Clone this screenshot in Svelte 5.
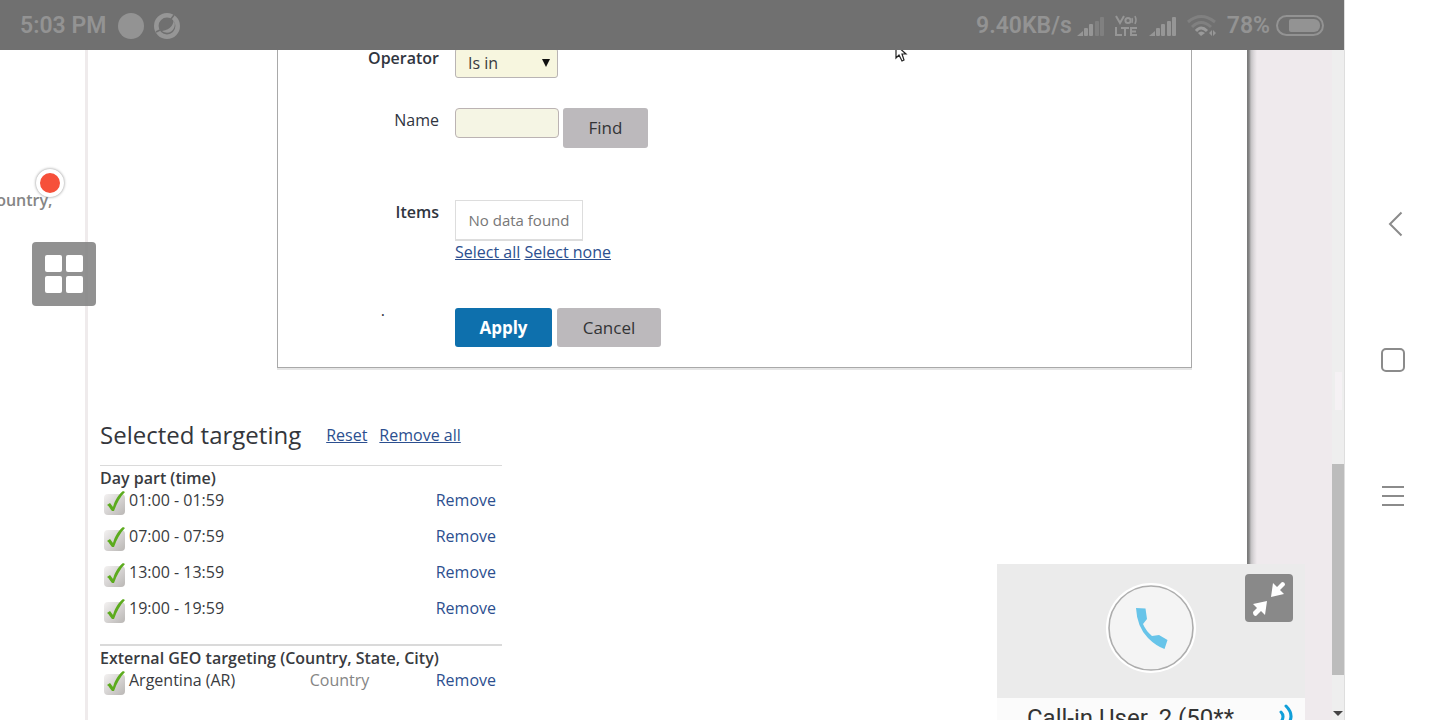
<script>
  const hours = ['01:00 - 01:59', '07:00 - 07:59', '13:00 - 13:59', '19:00 - 19:59'];
  const regions = [{ name: 'Argentina (AR)', type: 'Country' }];
  const bars = [8, 12, 15, 19];
</script>

{#snippet signal(dim)}
  <svg class="signal" width="28" height="20" viewBox="0 0 28 20" aria-hidden="true">
    <path d="M0 20 6 15V20Z" fill="#969696" />
    {#each bars as h, i}
      <rect x={7 + i * 5 + (i > 1 ? 1 : 0)} y={20 - h} width="4" height={h} rx="1" fill={dim && i > 1 ? '#808080' : '#969696'} />
    {/each}
  </svg>
{/snippet}

{#snippet check()}
  <svg class="check" width="24" height="24" viewBox="0 0 24 24" aria-hidden="true">
    <defs>
      <linearGradient id="tile" x1="0" y1="0" x2="1" y2="1">
        <stop offset="0" stop-color="#f4f2f2" />
        <stop offset="1" stop-color="#b9b6b4" />
      </linearGradient>
    </defs>
    <rect x="0" y="3" width="21" height="21" rx="4" fill="url(#tile)" />
    <path d="M3 14 6 12 9 16C11 9 14 4 19 0L21 1C16 6 13 12 10 20H8C6 18 5 15 3 14Z" fill="#5cab1e" />
  </svg>
{/snippet}

<div class="screen">
  <div class="main">
    <header class="status">
      <span>5:03 PM</span>
      <svg class="disc" width="26" height="26" viewBox="0 0 26 26" aria-hidden="true"><circle cx="13" cy="13" r="13" fill="#939393" /></svg>
      <svg class="ring" width="26" height="26" viewBox="0 0 26 26" aria-hidden="true">
        <circle cx="13" cy="13" r="10.7" fill="none" stroke="#969696" stroke-width="4.6" />
        <path d="M19 5C21 10 17 17 8 18C12 21 18 20 20 15C22 11 20 7 19 5Z" fill="#969696" />
        <path d="M17 6 20 2M2 19 6 17" stroke="#707070" stroke-width="1.5" />
      </svg>
      <span class="rate">9.40KB/s</span>
      {@render signal(true)}
      <svg class="volte" width="24" height="22" viewBox="0 0 24 22" aria-hidden="true">
        <g fill="none" stroke="#969696" stroke-width="2">
          <path d="M1 1 5 8 9 1M1 12V20H7M6 13H14M10 13V21M22 13H16V20H22M16 16.500H21" />
          <circle cx="13" cy="5.500" r="2.600" />
          <path d="M17 3Q18 5 17 8M20 1Q22 5 20 9" stroke-width="1.500" />
        </g>
      </svg>
      {@render signal(false)}
      <svg class="wifi" width="30" height="24" viewBox="0 0 30 24" aria-hidden="true">
        <g fill="none" stroke-width="3">
          <path d="M1 8Q14 -3 28 8" stroke="#808080" />
          <path d="M5 13Q14 4 24 13" stroke="#808080" />
          <path d="M9 17Q14 11 20 17" stroke="#9a9a9a" />
        </g>
        <path d="M11 19Q14 16 18 19L14 22Z" fill="#9a9a9a" />
        <path d="M25 16V22L22 19M26 22V16L29 19" fill="#969696" />
      </svg>
      <span>78%</span>
      <span class="battery"><span></span></span>
    </header>

    <div class="viewport">
      <aside class="side"><span>Country,</span></aside>
      <main class="page">
        <form class="panel" onsubmit={(e) => e.preventDefault()}>
          <div class="field">
            <label class="medium first" for="operator">Operator</label>
            <div class="control select">
              <select id="operator"><option>Is in</option></select>
            </div>
          </div>
          <div class="field name">
            <label for="name">Name</label>
            <div class="control">
              <input id="name" type="text" />
              <button class="find" type="button">Find</button>
            </div>
          </div>
          <div class="field items">
            <span class="label medium">Items</span>
            <div>
              <div class="empty">No data found</div>
              <div class="links"><a href="#all">Select all</a> <a href="#none">Select none</a></div>
            </div>
          </div>
          <div class="field">
            <span class="label point">.</span>
            <div class="control actions">
              <button class="apply" type="submit">Apply</button>
              <button class="cancel" type="button">Cancel</button>
            </div>
          </div>
        </form>

        <section class="targeting">
          <div class="heading">
            <h2>Selected targeting</h2>
            <a href="#reset">Reset</a>
            <a href="#remove-all">Remove all</a>
          </div>
          <div class="group">
            <h3>Day part (time)</h3>
            {#each hours as hour}
              <div class="row">{@render check()}<span class="what">{hour}</span><a href="#remove">Remove</a></div>
            {/each}
          </div>
          <div class="group geo">
            <h3>External GEO targeting (Country, State, City)</h3>
            {#each regions as region}
              <div class="row">{@render check()}<span class="what">{region.name}</span><span class="type">{region.type}</span><a href="#remove">Remove</a></div>
            {/each}
          </div>
        </section>
      </main>
      <div class="gutter"></div>
      <div class="scroll"><span class="mark"></span><span class="thumb"></span><span class="down"></span></div>
    </div>

    <svg class="cursor" width="14" height="19" viewBox="0 0 14 19" aria-hidden="true">
      <path d="M1 1V14L4 11 7 17 9 16 7 10H11Z" fill="#fff" stroke="#222" stroke-width="1.2" />
    </svg>
    <span class="record"></span>
    <button class="tiles" type="button" aria-label="Apps"><i></i><i></i><i></i><i></i></button>

    <div class="call">
      <div class="stage">
        <svg class="avatar" width="90" height="90" viewBox="0 0 90 90" aria-hidden="true">
          <circle cx="45" cy="45" r="45" fill="#fff" />
          <circle cx="45" cy="45" r="42" fill="#f4f4f4" stroke="#adadad" stroke-width="1.6" />
          <path d="M30 25 39.500 25.500 41 36 37 41Q40 48 46 53L53 52 61.500 57 58.500 66Q50 63 42 55Q31 44 30 25Z" fill="#67c4e9" />
        </svg>
        <button class="shrink" type="button" aria-label="Minimize">
          <svg width="48" height="48" viewBox="0 0 48 48" aria-hidden="true">
            <path d="M26 23 28 9 32 13 37 8Q40 8 40 11L35 16 39 20ZM22 27 8 30 12 34 8 38Q8 42 11 42L16 37 20 41Z" fill="#fff" />
          </svg>
        </button>
      </div>
      <div class="caller">
        <span>Call-in User_2 (50**</span>
        <svg width="16" height="24" viewBox="0 0 16 24" aria-hidden="true">
          <path d="M2 8Q6 12 2 18M7 2Q17 12 7 23" fill="none" stroke="#109fd9" stroke-width="3" stroke-linecap="round" />
        </svg>
      </div>
    </div>
  </div>

  <nav class="system">
    <button type="button" aria-label="Back"><svg width="24" height="26" viewBox="0 0 24 26"><path d="M20.500 1.500 9 13 20.500 24.500" /></svg></button>
    <button type="button" aria-label="Home"><svg width="24" height="26" viewBox="0 0 24 26"><rect x="1" y="2" width="22" height="22" rx="4" /></svg></button>
    <button type="button" aria-label="Menu"><svg width="24" height="26" viewBox="0 0 24 26"><path d="M1 4H23M1 13H23M1 22H23" /></svg></button>
  </nav>
</div>

<style>
  :global(body) { margin: 0; background: #fff; }
  * { box-sizing: border-box; }
  .screen { display: flex; height: 100vh; overflow: hidden; font: 16px/24px "Open Sans", sans-serif; color: #393b40; }
  button { font: inherit; border: 0; padding: 0; }
  a { color: #2c4f8f; }

  .main { position: relative; flex: 1; display: flex; flex-direction: column; min-width: 0; }
  .status { display: flex; align-items: center; flex: none; height: 50px; padding: 2px 20px 0; background: #707070; color: #939393; font: 600 23px/28px Roboto, sans-serif; }
  .disc { margin-left: 12px; }
  .ring { margin-left: 10px; }
  .rate { margin-left: auto; }
  .signal { margin-left: 5px; }
  .volte { margin-left: 10px; }
  .volte + .signal { margin-left: 10px; }
  .wifi { margin: 0 10px; }
  .battery { width: 48px; height: 21px; margin: 0 0 2px 6px; padding: 2px; border: 2px solid #939393; border-radius: 11px; }
  .battery span { display: block; width: 31px; height: 13px; margin-left: 9px; border-radius: 2px 6px 6px 2px; background: #939393; }

  .viewport { flex: 1; display: flex; min-height: 0; overflow: hidden; }
  .side { width: 85px; flex: none; padding-top: 138px; color: #858585; font-weight: 600; }
  .side span { display: block; width: 54px; direction: rtl; white-space: nowrap; unicode-bidi: plaintext; text-align: right; margin-left: -14px; }
  .page { flex: 1; min-width: 0; height: 100%; border-left: 3px solid #efebec; }

  .panel { margin: -21px 55px 0 189px; padding: 18px 0 20px; border: 1px solid #a9a9a9; box-shadow: 0 2px 0 #e6e6e6; }
  .field { display: flex; align-items: flex-start; gap: 16px; margin-bottom: 30px; }
  .field:last-child { margin-bottom: 0; }
  .items { margin-bottom: 44px; }
  .name { margin-bottom: 52px; }
  .field > label, .label { width: 161px; flex: none; text-align: right; color: #303540; }
  .medium { font-weight: 600; }
  .first { line-height: 20px; }
  .point { padding-right: 54px; line-height: 4px; }
  .control { display: flex; align-items: flex-start; gap: 4px; }
  .select { position: relative; }
  .select::after { content: ""; position: absolute; right: 8px; top: 11px; border: 4px solid transparent; border-top: 8px solid #111; border-bottom: 0; }
  select { appearance: none; width: 103px; height: 30px; padding: 0 12px; border: 1px solid #b9b4b4; border-radius: 3px; background: #f7f6df; color: #393b40; font: inherit; }
  input { width: 104px; height: 30px; border: 1px solid #bbb3b3; border-radius: 4px; background: #f5f5e4; font: inherit; }
  .find, .cancel, .apply { border-radius: 3px; background: #bcb9bc; color: #333436; font-size: 17px; }
  .find { width: 85px; height: 40px; }
  .actions { gap: 5px; }
  .apply, .cancel { height: 39px; }
  .apply { width: 97px; background: #0e70ad; color: #fff; font-weight: 700; }
  .cancel { width: 104px; }
  .empty { width: 128px; height: 41px; border: 1px solid #ddd; border-bottom-width: 2px; color: #777; font-size: 15px; line-height: 38px; text-align: center; }
  .links { height: 23px; line-height: 22px; white-space: nowrap; }

  .targeting { width: 402px; margin: 49px 0 0 12px; }
  .heading { display: flex; align-items: center; height: 36px; margin-bottom: 12px; }
  h2 { margin: 0 13px 0 0; color: #34363b; font-size: 24px; font-weight: 400; line-height: 36px; white-space: nowrap; }
  .heading a { margin-left: 12px; white-space: nowrap; }
  .group { border-top: 1px solid #dadada; }
  .geo { margin-top: 10px; border-top-width: 2px; }
  h3 { margin: 0; font-size: 16px; font-weight: 600; line-height: 24px; white-space: nowrap; }
  .row { display: flex; align-items: flex-start; height: 36px; padding: 0 6px 0 4px; line-height: 20px; }
  .check { flex: none; margin: 1px 1px 0 0; }
  .what { flex: 1; }
  .type { width: 126px; color: #858585; }
  .row a { text-decoration: none; }

  .gutter { flex: none; width: 85px; background: linear-gradient(90deg, #777 0, #858585 2px, #c4c2c4 4px, #ddd9dc 7px, #efeaed 10px); }
  .scroll { flex: none; display: flex; flex-direction: column; align-items: center; width: 12px; background: #eee; }
  .mark { width: 7px; height: 38px; margin-top: 322px; background: #f5f1f4; }
  .thumb { width: 12px; height: 211px; margin-top: 54px; background: #bcbcbc; }
  .down { margin-top: 36px; border: 5px solid transparent; border-top-color: #444; border-bottom: 0; }

  .cursor { position: absolute; left: 895px; top: 44px; clip-path: inset(6px 0 0 0); }
  .record { position: absolute; left: 36px; top: 169px; width: 28px; height: 28px; border: 4px solid #fff; border-radius: 50%; background: #f6503a; box-shadow: 0 0 3px #888; }
  .tiles { position: absolute; left: 32px; top: 242px; display: grid; grid-template-columns: 17px 17px; gap: 4px; place-content: center; width: 64px; height: 64px; border-radius: 4px; background: #808080dd; }
  .tiles i { height: 17px; border-radius: 2px; background: #fff; }

  .call { position: absolute; right: 39px; bottom: 0; width: 308px; height: 156px; overflow: hidden; background: #fbfbfb; }
  .stage { position: relative; display: flex; justify-content: center; align-items: center; height: 134px; padding-bottom: 6px; background: #ebebeb; }
  .shrink { position: absolute; right: 12px; top: 10px; width: 48px; height: 48px; border-radius: 4px; background: #898989; }
  .shrink svg { display: block; }
  .caller { display: flex; align-items: flex-start; justify-content: space-between; padding: 6px 10px 0 30px; color: #333; font: 24px/28px Roboto, sans-serif; }

  .system { flex: none; width: 96px; display: flex; flex-direction: column; align-items: center; justify-content: center; gap: 110px; border-left: 1px solid #dedede; background: #fff; }
  .system button { display: block; height: 26px; background: none; }
  .system svg { display: block; fill: none; stroke: #8b8b8b; stroke-width: 2; }
</style>
